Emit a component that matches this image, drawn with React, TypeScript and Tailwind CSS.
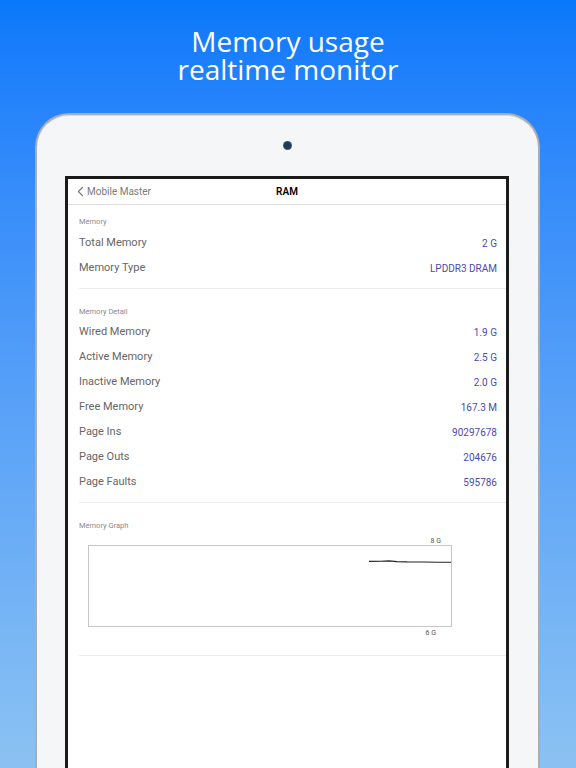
import { ChevronLeft } from "lucide-react";

const memory = [
  { label: "Total Memory", value: "2 G" },
  { label: "Memory Type", value: "LPDDR3 DRAM" },
];

const detail = [
  { label: "Wired Memory", value: "1.9 G" },
  { label: "Active Memory", value: "2.5 G" },
  { label: "Inactive Memory", value: "2.0 G" },
  { label: "Free Memory", value: "167.3 M" },
  { label: "Page Ins", value: "90297678" },
  { label: "Page Outs", value: "204676" },
  { label: "Page Faults", value: "595786" },
];

function Row({ label, value }: { label: string; value: string }) {
  return (
    <div className="flex h-[25px] items-center justify-between pr-[9px] text-[11px]">
      <span className="text-[#666]">{label}</span>
      <span className="text-[10px] text-[#4a4ab0]">{value}</span>
    </div>
  );
}

function SectionLabel({ children }: { children: string }) {
  return <div className="flex h-[10px] items-center text-[7.5px] text-[#8a8a8a]">{children}</div>;
}

export default function App() {
  return (
    <div
      className="h-[768px] w-[576px] overflow-hidden bg-gradient-to-b from-[#0878fb] to-[#8bc2f2]"
      style={{ fontFamily: "Roboto, Inter, sans-serif" }}
    >
      <div
        className="pt-[27px] text-center text-[28px] leading-[28px] text-white"
        style={{ fontFamily: "'Open Sans', sans-serif" }}
      >
        <div>Memory usage</div>
        <div>realtime monitor</div>
      </div>

      {/* tablet frame */}
      <div className="ml-[35px] mt-[30px] h-[700px] w-[505px] rounded-t-[34px] border-x-2 border-t-2 border-[#a9adb3] bg-[#f5f6f8] shadow-[inset_0_1px_0_#d9dce0]">
        <div className="flex justify-center pt-[27px]">
          <div className="h-[7px] w-[7px] rounded-full bg-[#1d3a58] shadow-[0_0_0_1px_#3a5878]" />
        </div>

        {/* screen */}
        <div className="ml-[28px] mt-[27px] h-[700px] w-[444px] border-[3px] border-[#1b1b1b] bg-white">
          <div className="relative flex h-[26px] items-center border-b border-[#dedede]">
            <div className="flex items-center pl-[4px] text-[10px] text-[#7a7a7a]">
              <ChevronLeft className="-mr-[2px] h-[17px] w-[17px]" strokeWidth={1.5} />
              <span>Mobile Master</span>
            </div>
            <div className="absolute inset-x-0 text-center text-[10px] font-semibold text-black">RAM</div>
          </div>

          <div className="ml-[11px] border-b border-[#ededed] pb-[7px] pt-[12px]">
            <div className="mb-[4px]">
              <SectionLabel>Memory</SectionLabel>
            </div>
            {memory.map((r) => (
              <Row key={r.label} {...r} />
            ))}
          </div>

          <div className="ml-[11px] border-b border-[#ededed] pb-[7px] pt-[18px]">
            <div className="mb-[3px]">
              <SectionLabel>Memory Detail</SectionLabel>
            </div>
            {detail.map((r) => (
              <Row key={r.label} {...r} />
            ))}
          </div>

          <div className="ml-[11px] border-b border-[#ededed] pb-[17px] pt-[18px]">
            <SectionLabel>Memory Graph</SectionLabel>
            <div className="ml-[9px] mt-[6px] w-[364px]">
              <div className="flex h-[8px] items-center justify-end pr-[11px] text-[7px] text-[#555]">8 G</div>
              <div className="h-[82px] border border-[#c6c6c6]">
                <svg width="362" height="80" viewBox="0 0 362 80">
                  <path
                    d="M280 15.4 L292 15.2 L300 14.9 L308 15.6 L318 15.9 L334 16.0 L350 16.3 L362 16.2"
                    fill="none"
                    stroke="#222"
                    strokeWidth="1.1"
                  />
                </svg>
              </div>
              <div className="mt-[2px] flex h-[9px] items-center justify-end pr-[16px] text-[7px] text-[#555]">6 G</div>
            </div>
          </div>
        </div>
      </div>
    </div>
  );
}
